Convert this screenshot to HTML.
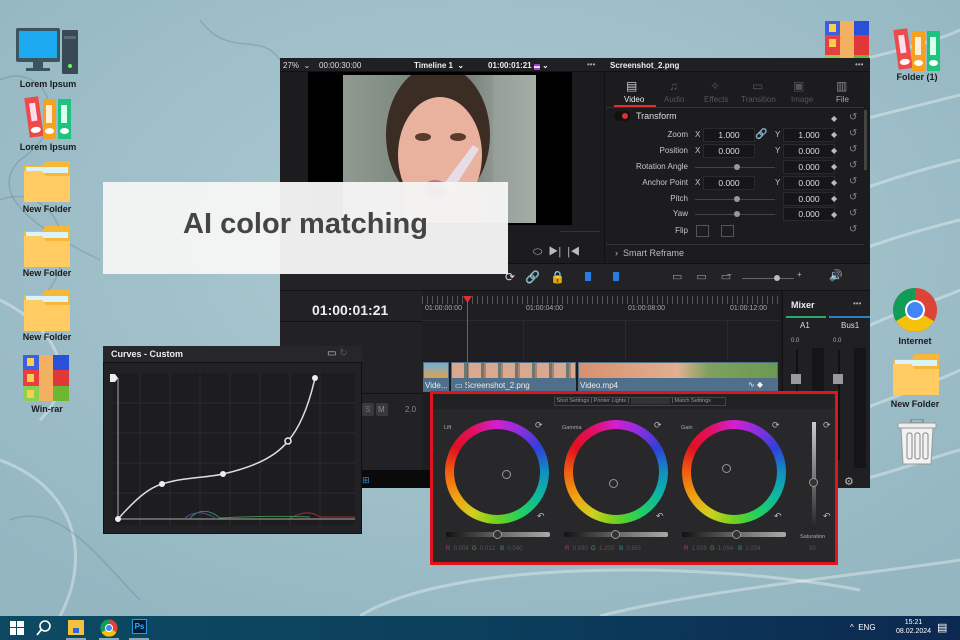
<!DOCTYPE html>
<html><head><meta charset="utf-8"><style>
*{margin:0;padding:0;box-sizing:border-box}
body{width:960px;height:640px;overflow:hidden;position:relative;font-family:"Liberation Sans",sans-serif;background:#a6c4cd}
.a{position:absolute}
.lbl{position:absolute;font-size:9px;font-weight:bold;color:#1a1a1a;text-align:center;width:80px}
.t{position:absolute;color:#c8c8c8;font-size:8px;white-space:nowrap}
.fld{position:absolute;width:52px;height:14px;background:#161618;border:1px solid #2a2a2e;color:#ddd;font-size:8.5px;text-align:center;line-height:12px}
.ring{position:absolute;width:104px;height:104px;border-radius:50%;background:conic-gradient(from 0deg,#d41fd0,#8a2fe0,#3040d8,#1090c0,#10b8a0,#20d060,#70d020,#d0d020,#f0a010,#f06010,#e01020,#e01060,#d41fd0)}
.ring::after{content:"";position:absolute;left:9px;top:9px;width:86px;height:86px;border-radius:50%;background:#28282b}
.dot{position:absolute;width:9px;height:9px;border:1.5px solid #999;border-radius:50%}
.sl{position:absolute;height:5px;width:104px;background:linear-gradient(90deg,#111,#666 50%,#aaa);border-radius:2px}
</style></head><body>
<svg class="a" style="left:0;top:0" width="960" height="616">
<defs><radialGradient id="bg" cx="50%" cy="40%" r="70%"><stop offset="0" stop-color="#aecbd3"/><stop offset="1" stop-color="#93b6c1"/></radialGradient></defs>
<rect width="960" height="616" fill="url(#bg)"/>
<g fill="none" stroke="#ffffff" stroke-opacity=".35" stroke-width="3">
<path d="M860 60 C900 50 940 40 960 30"/><path d="M860 120 C900 110 940 100 960 95"/><path d="M860 190 C900 175 940 165 960 160"/><path d="M860 250 C900 235 940 225 960 220"/>
<path d="M860 330 C900 310 940 300 960 290"/><path d="M860 410 C900 395 940 380 960 370"/><path d="M860 480 C900 470 940 455 960 450"/>
<path d="M360 616 C450 560 700 560 860 590"/><path d="M600 616 C700 590 900 570 960 560"/>
<path d="M0 300 C60 330 80 380 40 420"/><path d="M0 460 C80 490 90 560 60 616"/>
</g>
<g fill="none" stroke="#4a6a75" stroke-opacity=".25" stroke-width="1.5">
<path d="M0 80 C40 60 80 120 20 160 C-20 200 60 240 100 260"/><path d="M0 200 C50 180 90 250 40 300"/><path d="M10 520 C60 500 100 560 140 600"/><path d="M200 20 C230 60 260 30 280 60"/>
</g>
</svg>

<svg class="a" style="left:16px;top:26px" width="62" height="50"><rect x="0" y="2" width="44" height="34" rx="2" fill="#3a5560"/><rect x="3" y="5" width="38" height="27" fill="#1eaaf0"/><rect x="17" y="36" width="10" height="6" fill="#3a5560"/><rect x="10" y="42" width="24" height="3" fill="#3a5560"/><rect x="46" y="4" width="16" height="44" rx="1" fill="#3a4a55"/><rect x="48" y="10" width="12" height="3" fill="#5a6a75"/><circle cx="54" cy="40" r="2" fill="#5f5"/></svg>
<div class="lbl" style="left:8px;top:79px">Lorem Ipsum</div>
<svg class="a" style="left:24px;top:95px" width="48" height="44"><g transform="rotate(-8 10 22)"><rect x="3" y="2" width="14" height="40" fill="#ee4a4a"/><rect x="7" y="8" width="6" height="18" fill="#fde"/><ellipse cx="10" cy="35" rx="5" ry="3" fill="#fff"/></g><rect x="19" y="4" width="13" height="40" fill="#f6a21e"/><rect x="22" y="10" width="6" height="18" fill="#fed"/><ellipse cx="25.5" cy="36" rx="4.5" ry="3" fill="#fff"/><rect x="34" y="4" width="13" height="40" fill="#1ec47e"/><rect x="37" y="10" width="6" height="18" fill="#dfe"/><ellipse cx="40.5" cy="36" rx="4.5" ry="3" fill="#fff"/></svg>
<div class="lbl" style="left:8px;top:142px">Lorem Ipsum</div>
<svg class="a" style="left:24px;top:160px" width="46" height="42"><path d="M0 6 h18 l4 -5 h24 v41 h-46z" fill="#f7b83a"/><rect x="2" y="7" width="42" height="6" fill="#d9f4fb"/><path d="M0 11 h18 l4 5 h24 v26 h-46z" fill="#ffcb62"/></svg>
<div class="lbl" style="left:7px;top:204px">New Folder</div>
<svg class="a" style="left:24px;top:225px" width="46" height="42"><path d="M0 6 h18 l4 -5 h24 v41 h-46z" fill="#f7b83a"/><rect x="2" y="7" width="42" height="6" fill="#d9f4fb"/><path d="M0 11 h18 l4 5 h24 v26 h-46z" fill="#ffcb62"/></svg>
<div class="lbl" style="left:7px;top:268px">New Folder</div>
<svg class="a" style="left:24px;top:289px" width="46" height="42"><path d="M0 6 h18 l4 -5 h24 v41 h-46z" fill="#f7b83a"/><rect x="2" y="7" width="42" height="6" fill="#d9f4fb"/><path d="M0 11 h18 l4 5 h24 v26 h-46z" fill="#ffcb62"/></svg>
<div class="lbl" style="left:7px;top:332px">New Folder</div>
<svg class="a" style="left:23px;top:355px" width="46" height="46"><rect width="16" height="15" fill="#3d5fe0"/><rect x="30" width="16" height="15" fill="#2a4fd8"/><rect y="15" width="16" height="16" fill="#e84040"/><rect x="30" y="15" width="16" height="16" fill="#e03838"/><rect y="31" width="16" height="15" fill="#8cd050"/><rect x="30" y="31" width="16" height="15" fill="#6cb830"/><rect x="16" width="14" height="46" fill="#f2b060"/><rect x="4" y="3" width="7" height="8" fill="#f7d050"/><rect x="4" y="19" width="7" height="8" fill="#f7d050"/><rect x="4" y="35" width="7" height="8" fill="#f7d050"/></svg>
<div class="lbl" style="left:7px;top:404px">Win-rar</div>

<svg class="a" style="left:825px;top:21px" width="44" height="40"><rect width="15" height="14" fill="#3d5fe0"/><rect x="29" width="15" height="14" fill="#2a4fd8"/><rect y="14" width="15" height="20" fill="#e84040"/><rect x="29" y="14" width="15" height="20" fill="#e03838"/><rect y="34" width="15" height="6" fill="#8cd050"/><rect x="29" y="34" width="15" height="6" fill="#6cb830"/><rect x="15" width="14" height="40" fill="#f2b060"/><rect x="4" y="3" width="7" height="8" fill="#f7d050"/><rect x="4" y="18" width="7" height="8" fill="#f7d050"/></svg>
<svg class="a" style="left:893px;top:27px" width="48" height="44"><g transform="rotate(-8 10 22)"><rect x="3" y="2" width="14" height="40" fill="#ee4a4a"/><rect x="7" y="8" width="6" height="18" fill="#fde"/><ellipse cx="10" cy="35" rx="5" ry="3" fill="#fff"/></g><rect x="19" y="4" width="13" height="40" fill="#f6a21e"/><rect x="22" y="10" width="6" height="18" fill="#fed"/><ellipse cx="25.5" cy="36" rx="4.5" ry="3" fill="#fff"/><rect x="34" y="4" width="13" height="40" fill="#1ec47e"/><rect x="37" y="10" width="6" height="18" fill="#dfe"/><ellipse cx="40.5" cy="36" rx="4.5" ry="3" fill="#fff"/></svg>
<div class="lbl" style="left:877px;top:72px">Folder (1)</div>
<svg class="a" style="left:892px;top:287px" width="46" height="46" viewBox="-23 -23 46 46"><circle r="22" fill="#db4437"/><path d="M0 0 L-19 11 A22 22 0 0 0 19 11Z" fill="#f4c20d"/><path d="M0 0 L0 -22 A22 22 0 0 0 -19 11Z" fill="#0f9d58"/><path d="M0-22 A22 22 0 0 1 19 11 L0 0Z" fill="#db4437"/><circle r="10" fill="#fff"/><circle r="8" fill="#4285f4"/></svg>
<div class="lbl" style="left:875px;top:336px">Internet</div>
<svg class="a" style="left:893px;top:353px" width="46" height="42"><path d="M0 6 h18 l4 -5 h24 v41 h-46z" fill="#f7b83a"/><rect x="2" y="7" width="42" height="6" fill="#d9f4fb"/><path d="M0 11 h18 l4 5 h24 v26 h-46z" fill="#ffcb62"/></svg>
<div class="lbl" style="left:875px;top:399px">New Folder</div>
<svg class="a" style="left:897px;top:419px" width="40" height="46"><rect x="14" y="0" width="12" height="4" fill="none" stroke="#888" stroke-width="1.5"/><rect x="1" y="4" width="38" height="5" rx="1" fill="#eee" stroke="#999"/><path d="M4 9 h32 l-2 36 h-28z" fill="#f2f2f2" stroke="#999"/><rect x="10" y="14" width="5" height="26" rx="2" fill="none" stroke="#888"/><rect x="18" y="14" width="5" height="26" rx="2" fill="none" stroke="#888"/><rect x="26" y="14" width="5" height="26" rx="2" fill="none" stroke="#888"/></svg>

<div class="a" style="left:280px;top:58px;width:590px;height:430px;background:#1c1c1f"></div>
<div class="a" style="left:280px;top:58px;width:590px;height:14px;background:#202024;border-bottom:1px solid #111"></div>
<div class="t" style="left:283px;top:61px;color:#ddd">27% &nbsp;⌄ &nbsp;&nbsp;&nbsp;00:00:30:00</div>
<div class="t" style="left:414px;top:61px;color:#eee;font-weight:bold">Timeline 1 &nbsp;⌄</div>
<div class="t" style="left:488px;top:61px;color:#eee;font-weight:bold">01:00:01:21 <span style="background:#a040d0;font-size:6px">▬</span> ⌄</div>
<div class="t" style="left:587px;top:60px;color:#aaa">•••</div>
<div class="t" style="left:610px;top:61px;color:#eee;font-weight:bold">Screenshot_2.png</div>
<div class="t" style="left:855px;top:60px;color:#aaa">•••</div>
<div class="a" style="left:604px;top:72px;width:1px;height:190px;background:#111"></div>
<div class="a" style="left:308px;top:72px;width:264px;height:153px;background:#000"></div>
<svg class="a" style="left:343px;top:75px" width="193" height="148"><defs><linearGradient id="wall" x1="0" x2="1"><stop offset="0" stop-color="#8f9a90"/><stop offset=".6" stop-color="#6f7a72"/><stop offset="1" stop-color="#b6bcb4"/></linearGradient></defs><rect width="193" height="148" fill="url(#wall)"/><ellipse cx="95" cy="60" rx="52" ry="70" fill="#3b2c24"/><ellipse cx="97" cy="80" rx="42" ry="58" fill="#e9b29e"/><rect x="60" y="110" width="80" height="40" fill="#e2a892"/><ellipse cx="80" cy="62" rx="8" ry="4" fill="#5a3a2a"/><ellipse cx="115" cy="62" rx="8" ry="4" fill="#5a3a2a"/><ellipse cx="92" cy="115" rx="12" ry="10" fill="#c86a80"/><ellipse cx="92" cy="117" rx="6" ry="5" fill="#6a2a30"/><path d="M100 110 l30 -40 l6 4 l-28 44z" fill="#e6dde8"/><rect x="150" y="0" width="43" height="148" fill="#9aa39c" opacity=".6"/></svg>
<div class="a" style="left:560px;top:231px;width:40px;height:1px;background:#333"></div>
<div class="t" style="left:533px;top:246px;font-size:11px;color:#bbb">⬭ &nbsp;▶| &nbsp;|◀</div>
<div class="t" style="left:626px;top:79px;font-size:12px;color:#ccc">▤</div>
<div class="t" style="left:669px;top:79px;font-size:12px;color:#555">♫</div>
<div class="t" style="left:710px;top:79px;font-size:12px;color:#555">✧</div>
<div class="t" style="left:752px;top:79px;font-size:12px;color:#555">▭</div>
<div class="t" style="left:793px;top:79px;font-size:12px;color:#555">▣</div>
<div class="t" style="left:836px;top:79px;font-size:12px;color:#888">▥</div>
<div class="t" style="left:624px;top:95px;color:#eee">Video</div>
<div class="t" style="left:664px;top:95px;color:#555">Audio</div>
<div class="t" style="left:704px;top:95px;color:#555">Effects</div>
<div class="t" style="left:741px;top:95px;color:#555">Transition</div>
<div class="t" style="left:791px;top:95px;color:#555">Image</div>
<div class="t" style="left:836px;top:95px;color:#aaa">File</div>
<div class="a" style="left:614px;top:105px;width:42px;height:2px;background:#e03030"></div>
<div class="a" style="left:606px;top:107px;width:258px;height:1px;background:#333"></div>
<div class="a" style="left:864px;top:110px;width:3px;height:60px;background:#444"></div>
<div class="a" style="left:614px;top:111px;width:16px;height:10px;border-radius:5px;background:#111"></div>
<div class="a" style="left:622px;top:113px;width:6px;height:6px;border-radius:3px;background:#e03030"></div>
<div class="t" style="left:636px;top:111px;font-size:9px;color:#ddd">Transform</div>
<div class="t" style="left:620px;top:130px;width:68px;text-align:right">Zoom</div>
<div class="t" style="left:620px;top:146px;width:68px;text-align:right">Position</div>
<div class="t" style="left:610px;top:162px;width:78px;text-align:right">Rotation Angle</div>
<div class="t" style="left:610px;top:178px;width:78px;text-align:right">Anchor Point</div>
<div class="t" style="left:620px;top:194px;width:68px;text-align:right">Pitch</div>
<div class="t" style="left:620px;top:209px;width:68px;text-align:right">Yaw</div>
<div class="t" style="left:620px;top:226px;width:68px;text-align:right">Flip</div>
<div class="t" style="left:695px;top:130px">X</div><div class="fld" style="left:703px;top:128px">1.000</div>
<div class="t" style="left:755px;top:129px;font-size:10px">🔗</div>
<div class="t" style="left:775px;top:130px">Y</div><div class="fld" style="left:783px;top:128px">1.000</div>
<div class="t" style="left:695px;top:146px">X</div><div class="fld" style="left:703px;top:144px">0.000</div>
<div class="t" style="left:775px;top:146px">Y</div><div class="fld" style="left:783px;top:144px">0.000</div>
<div class="a" style="left:695px;top:167px;width:80px;height:1px;background:#444"></div><div class="a" style="left:734px;top:164px;width:6px;height:6px;border-radius:3px;background:#999"></div><div class="fld" style="left:783px;top:160px">0.000</div>
<div class="t" style="left:695px;top:178px">X</div><div class="fld" style="left:703px;top:176px">0.000</div>
<div class="t" style="left:775px;top:178px">Y</div><div class="fld" style="left:783px;top:176px">0.000</div>
<div class="a" style="left:695px;top:199px;width:80px;height:1px;background:#444"></div><div class="a" style="left:734px;top:196px;width:6px;height:6px;border-radius:3px;background:#999"></div><div class="fld" style="left:783px;top:192px">0.000</div>
<div class="a" style="left:695px;top:214px;width:80px;height:1px;background:#444"></div><div class="a" style="left:734px;top:211px;width:6px;height:6px;border-radius:3px;background:#999"></div><div class="fld" style="left:783px;top:207px">0.000</div>
<div class="a" style="left:696px;top:225px;width:13px;height:12px;border:1px solid #555"></div><div class="a" style="left:721px;top:225px;width:13px;height:12px;border:1px solid #555"></div>
<div class="t" style="left:831px;top:111px;line-height:16px;color:#bbb">◆<br>◆<br>◆<br>◆<br>◆<br>◆<br>◆</div>
<div class="t" style="left:849px;top:110px;line-height:16px;color:#888;font-size:10px">↺<br>↺<br>↺<br>↺<br>↺<br>↺<br>↺<br>↺</div>
<div class="a" style="left:606px;top:244px;width:258px;height:1px;background:#333"></div>
<div class="t" style="left:615px;top:248px;font-size:9px;color:#bbb">›&nbsp; Smart Reframe</div>
<div class="a" style="left:280px;top:263px;width:590px;height:28px;background:#232326;border-top:1px solid #111;border-bottom:1px solid #111"></div>
<div class="t" style="left:505px;top:270px;font-size:12px;color:#ddd;letter-spacing:10px">⟳🔗🔒</div>
<div class="a" style="left:585px;top:272px;width:6px;height:9px;background:#2a7de0"></div>
<div class="a" style="left:613px;top:272px;width:6px;height:9px;background:#2a7de0"></div>
<div class="t" style="left:672px;top:270px;font-size:11px;color:#999;letter-spacing:14px">▭▭▭</div>
<div class="t" style="left:727px;top:270px;color:#bbb">−</div>
<div class="a" style="left:742px;top:278px;width:52px;height:1px;background:#666"></div><div class="a" style="left:774px;top:275px;width:6px;height:6px;border-radius:3px;background:#bbb"></div>
<div class="t" style="left:797px;top:270px;color:#bbb">+</div>
<div class="t" style="left:829px;top:269px;font-size:11px;color:#ddd">🔊</div>
<div class="a" style="left:280px;top:291px;width:142px;height:180px;background:#222226"></div>
<div class="t" style="left:312px;top:302px;font-size:14px;font-weight:bold;color:#eee">01:00:01:21</div>
<div class="a" style="left:280px;top:321px;width:142px;height:1px;background:#111"></div>
<div class="a" style="left:422px;top:291px;width:358px;height:180px;background:#1e1e22"></div>
<div class="a" style="left:422px;top:296px;width:358px;height:8px;background:repeating-linear-gradient(90deg,#555 0 1px,transparent 1px 5px)"></div>
<div class="t" style="left:425px;top:305px;font-size:7px;color:#aaa">01:00:00:00</div>
<div class="t" style="left:526px;top:305px;font-size:7px;color:#aaa">01:00:04:00</div>
<div class="t" style="left:628px;top:305px;font-size:7px;color:#aaa">01:00:08:00</div>
<div class="t" style="left:730px;top:305px;font-size:7px;color:#aaa">01:00:12:00</div>
<div class="a" style="left:422px;top:320px;width:358px;height:1px;background:#2a2a2e"></div>
<div class="a" style="left:523px;top:320px;width:1px;height:40px;background:#2a2a2e"></div><div class="a" style="left:625px;top:320px;width:1px;height:40px;background:#2a2a2e"></div><div class="a" style="left:727px;top:320px;width:1px;height:40px;background:#2a2a2e"></div>
<div class="a" style="left:423px;top:362px;width:26px;height:30px;background:#4f6f8a"></div>
<div class="a" style="left:424px;top:363px;width:24px;height:15px;background:linear-gradient(#6fb0d8,#e0a050)"></div>
<div class="a" style="left:451px;top:362px;width:125px;height:30px;background:#4f6f8a"></div>
<div class="a" style="left:452px;top:363px;width:123px;height:15px;background:repeating-linear-gradient(90deg,#d8a890 0 12px,#6a7a70 12px 15px,#b08070 15px 17px)"></div>
<div class="a" style="left:578px;top:362px;width:200px;height:30px;background:#4f6f8a"></div>
<div class="a" style="left:579px;top:363px;width:198px;height:15px;background:linear-gradient(90deg,#d89070,#e0b090 50%,#80a060 65%,#6a9a50)"></div>
<div class="t" style="left:425px;top:381px;color:#eee">Vide...</div>
<div class="t" style="left:455px;top:381px;color:#eee">▭ Screenshot_2.png</div>
<div class="t" style="left:580px;top:381px;color:#eee">Video.mp4</div>
<div class="t" style="left:748px;top:380px;color:#eee">∿ ◆</div>
<div class="a" style="left:467px;top:297px;width:1px;height:95px;background:#e03030"></div>
<div class="a" style="left:463px;top:296px;width:9px;height:7px;background:#e03030;clip-path:polygon(0 0,100% 0,50% 100%)"></div>
<div class="a" style="left:280px;top:393px;width:142px;height:1px;background:#111"></div>
<div class="a" style="left:362px;top:403px;width:12px;height:13px;background:#3a3a3e;border-radius:2px"></div>
<div class="a" style="left:376px;top:403px;width:12px;height:13px;background:#3a3a3e;border-radius:2px"></div>
<div class="t" style="left:365px;top:405px;color:#777">S</div><div class="t" style="left:378px;top:405px;color:#888">M</div>
<div class="t" style="left:405px;top:405px;color:#888">2.0</div>
<div class="a" style="left:280px;top:470px;width:150px;height:18px;background:#0a0a0a"></div>
<div class="t" style="left:362px;top:475px;font-size:9px;color:#3a8ad0">⊞</div>
<div class="a" style="left:782px;top:291px;width:88px;height:197px;background:#202024;border-left:1px solid #111"></div>
<div class="t" style="left:791px;top:300px;font-size:9px;color:#eee;font-weight:bold">Mixer</div>
<div class="t" style="left:853px;top:299px;color:#aaa">•••</div>
<div class="a" style="left:786px;top:316px;width:40px;height:2px;background:#2aa870"></div>
<div class="a" style="left:829px;top:316px;width:41px;height:2px;background:#2a80c0"></div>
<div class="t" style="left:800px;top:321px;color:#ddd">A1</div><div class="t" style="left:841px;top:321px;color:#ddd">Bus1</div>
<div class="t" style="left:791px;top:338px;font-size:6px;color:#aaa">0.0</div><div class="t" style="left:833px;top:338px;font-size:6px;color:#aaa">0.0</div>
<div class="a" style="left:796px;top:350px;width:2px;height:110px;background:#111"></div><div class="a" style="left:791px;top:374px;width:10px;height:10px;background:#999"></div>
<div class="a" style="left:838px;top:350px;width:2px;height:110px;background:#111"></div><div class="a" style="left:833px;top:374px;width:10px;height:10px;background:#999"></div>
<div class="a" style="left:812px;top:348px;width:12px;height:120px;background:#151517"></div><div class="a" style="left:854px;top:348px;width:12px;height:120px;background:#151517"></div>
<div class="t" style="left:844px;top:475px;font-size:11px;color:#bbb">⚙</div>

<div class="a" style="left:103px;top:182px;width:405px;height:92px;background:rgba(245,245,245,.96)"></div>
<div class="a" style="left:103px;top:208px;width:405px;text-align:center;font-size:29px;font-weight:bold;color:#454545;font-family:'Liberation Sans',sans-serif">AI color matching</div>

<div class="a" style="left:103px;top:346px;width:259px;height:188px;background:#222226;border:1px solid #111"></div>
<div class="a" style="left:103px;top:346px;width:259px;height:17px;background:#27272b;border-bottom:1px solid #111"></div>
<div class="t" style="left:111px;top:349px;font-size:9px;color:#eee;font-weight:bold">Curves - Custom</div>
<div class="t" style="left:327px;top:348px;font-size:10px;color:#ccc">▭ <span style="color:#555">↻</span></div>
<svg class="a" style="left:110px;top:370px" width="248" height="158">
<rect x="3" y="3" width="242" height="152" fill="#1d1d20"/>
<g stroke="#2c2c30" stroke-width="1"><path d="M30 3V155M60 3V155M90 3V155M120 3V155M150 3V155M180 3V155M210 3V155M3 33H245M3 63H245M3 93H245M3 123H245"/></g>
<path d="M8 8 V149 H245" fill="none" stroke="#aaa" stroke-width="1"/>
<path d="M180 148 C190 143 200 140 210 147 L245 147" fill="none" stroke="#a03030"/>
<path d="M80 148 C90 138 100 140 110 148 C140 146 180 146 200 147" fill="none" stroke="#3a8a50"/>
<path d="M75 148 C85 140 95 142 105 148" fill="none" stroke="#5050a0"/>
<path d="M8 149 C25 130 38 118 52 114 C75 107 95 108 113 104 C140 98 165 88 178 71 C192 55 200 30 205 8" fill="none" stroke="#ddd" stroke-width="1.5"/>
<circle cx="8" cy="149" r="3" fill="#eee"/><circle cx="52" cy="114" r="3" fill="#eee"/><circle cx="113" cy="104" r="3" fill="#eee"/><circle cx="178" cy="71" r="3" fill="#1d1d20" stroke="#eee" stroke-width="1.5"/><circle cx="205" cy="8" r="3" fill="#eee"/>
<path d="M0 4 h5 l3 4 l-3 4 h-5z" fill="#eee"/>
</svg>

<div class="a" style="left:430px;top:391px;width:408px;height:174px;background:#28282b;border:3px solid #e0141c"></div>
<div class="a" style="left:433px;top:394px;width:402px;height:15px;background:#222225"></div>
<div class="a" style="left:554px;top:397px;width:172px;height:9px;border:1px solid #444;font-size:5.5px;color:#999;line-height:7px;white-space:nowrap">&nbsp;Shot Settings | Printer Lights | <span style="background:#333;color:#333">Custom Ranges</span> | Match Settings</div>
<div class="t" style="left:444px;top:425px;font-size:5.5px;color:#aaa">Lift</div>
<div class="t" style="left:562px;top:425px;font-size:5.5px;color:#aaa">Gamma</div>
<div class="t" style="left:681px;top:425px;font-size:5.5px;color:#aaa">Gain</div>
<div class="ring" style="left:445px;top:420px"></div>
<div class="ring" style="left:564px;top:420px"></div>
<div class="ring" style="left:682px;top:420px"></div>
<div class="dot" style="left:502px;top:470px"></div>
<div class="dot" style="left:609px;top:479px"></div>
<div class="dot" style="left:722px;top:464px"></div>
<div class="t" style="left:535px;top:420px;font-size:9px;color:#bbb">⟳</div><div class="t" style="left:654px;top:420px;font-size:9px;color:#bbb">⟳</div><div class="t" style="left:772px;top:420px;font-size:9px;color:#bbb">⟳</div><div class="t" style="left:823px;top:420px;font-size:9px;color:#bbb">⟳</div>
<div class="t" style="left:537px;top:511px;font-size:9px;color:#bbb">↶</div><div class="t" style="left:656px;top:511px;font-size:9px;color:#bbb">↶</div><div class="t" style="left:774px;top:511px;font-size:9px;color:#bbb">↶</div><div class="t" style="left:823px;top:511px;font-size:9px;color:#bbb">↶</div>
<div class="sl" style="left:446px;top:532px"></div><div class="sl" style="left:564px;top:532px"></div><div class="sl" style="left:682px;top:532px"></div>
<div class="dot" style="left:493px;top:530px;background:#333"></div><div class="dot" style="left:611px;top:530px;background:#333"></div><div class="dot" style="left:732px;top:530px;background:#333"></div>
<div class="a" style="left:812px;top:422px;width:4px;height:108px;background:linear-gradient(#ccc,#222)"></div>
<div class="dot" style="left:809px;top:478px;background:#333"></div>
<div class="t" style="left:800px;top:534px;font-size:5.5px;color:#aaa">Saturation</div>
<div class="t" style="left:809px;top:546px;font-size:6px;color:#555">50</div>
<div class="t" style="left:446px;top:546px;font-size:6px;color:#555"><span style="color:#c03080">R</span> &nbsp;0.004 &nbsp;<span style="color:#40a040">G</span> &nbsp;0.012 &nbsp;&nbsp;<span style="color:#2090a0">B</span> &nbsp;0.040</div>
<div class="t" style="left:565px;top:546px;font-size:6px;color:#555"><span style="color:#c03080">R</span> &nbsp;0.930 &nbsp;<span style="color:#40a040">G</span> &nbsp;1.200 &nbsp;&nbsp;<span style="color:#2090a0">B</span> &nbsp;0.851</div>
<div class="t" style="left:684px;top:546px;font-size:6px;color:#555"><span style="color:#c03080">R</span> &nbsp;1.028 &nbsp;<span style="color:#40a040">G</span> &nbsp;1.054 &nbsp;&nbsp;<span style="color:#2090a0">B</span> &nbsp;1.024</div>

<div class="a" style="left:0;top:616px;width:960px;height:24px;background:linear-gradient(90deg,#0d4a62,#0b3f5c 50%,#0c2850)"></div>
<svg class="a" style="left:10px;top:621px" width="14" height="14"><rect width="6" height="6" fill="#fff"/><rect x="7" width="7" height="6" fill="#fff"/><rect y="7" width="6" height="7" fill="#fff"/><rect x="7" y="7" width="7" height="7" fill="#fff"/></svg>
<svg class="a" style="left:36px;top:619px" width="16" height="18"><circle cx="9" cy="7" r="5" fill="none" stroke="#fff" stroke-width="1.6"/><path d="M5 11 L1 16" stroke="#fff" stroke-width="1.8"/></svg>
<svg class="a" style="left:68px;top:620px" width="16" height="15"><rect width="16" height="15" fill="#f5c040"/><rect x="5" y="8" width="6" height="5" fill="#2a6ad0"/></svg>
<div class="a" style="left:66px;top:638px;width:20px;height:2px;background:#8ab"></div>
<svg class="a" style="left:100px;top:619px" width="18" height="18" viewBox="-9 -9 18 18"><circle r="8.5" fill="#db4437"/><path d="M0 0 L-7.4 4.3 A8.5 8.5 0 0 0 7.4 4.3Z" fill="#f4c20d"/><path d="M0 0 L0 -8.5 A8.5 8.5 0 0 0 -7.4 4.3Z" fill="#0f9d58"/><circle r="4" fill="#fff"/><circle r="3" fill="#4285f4"/></svg>
<div class="a" style="left:99px;top:638px;width:20px;height:2px;background:#8ab"></div>
<div class="a" style="left:132px;top:619px;width:15px;height:15px;background:#001d34;border:1px solid #2a9af0;color:#3aa8ff;font-size:8px;font-weight:bold;line-height:13px;text-align:center">Ps</div>
<div class="a" style="left:129px;top:638px;width:20px;height:2px;background:#8ab"></div>
<div class="t" style="left:850px;top:623px;color:#fff;font-size:8px">^ &nbsp;ENG</div>
<div class="t" style="left:896px;top:618px;color:#fff;font-size:7px;text-align:center;line-height:9px">15:21<br>08.02.2024</div>
<div class="t" style="left:937px;top:621px;color:#fff;font-size:11px">▤</div>
</body></html>
